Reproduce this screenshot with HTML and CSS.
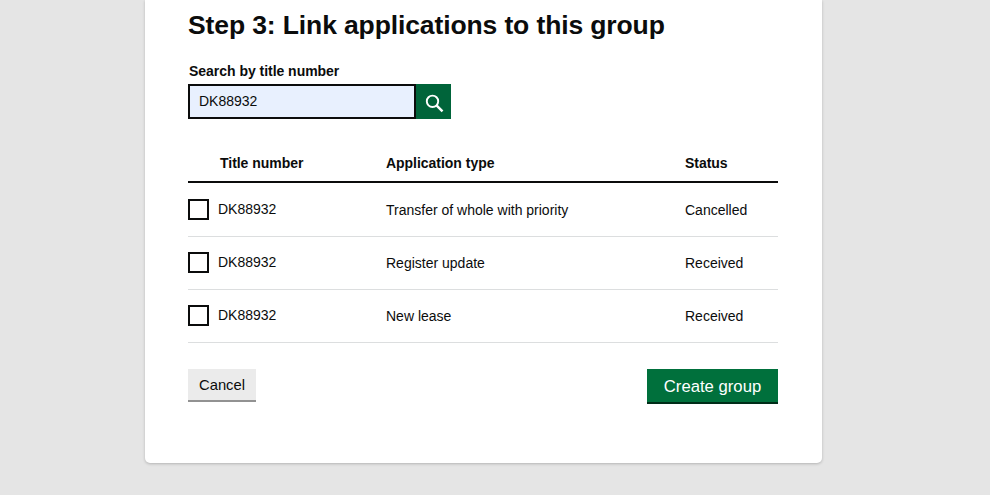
FILE: index.html
```html
<!DOCTYPE html>
<html lang="en">
<head>
<meta charset="utf-8">
<title>Link applications</title>
<link rel="stylesheet" href="styles.css">
</head>
<body>
<main class="card">
  <h1>Step 3: Link applications to this group</h1>
  <label class="label" for="search">Search by title number</label>
  <div class="search">
    <input id="search" class="search-input" type="text" value="DK88932">
    <button class="search-button" aria-label="Search"><svg width="19" height="19" viewBox="0 0 19 19" fill="none" stroke="#fff"><circle cx="7.5" cy="7.3" r="5.7" stroke-width="1.9"/><path d="M11.5 11.3L17.5 17.3" stroke-width="2.4"/></svg></button>
  </div>
  <div class="table">
    <div class="row head"><span class="title">Title number</span><span>Application type</span><span>Status</span></div>
    <div class="row"><label class="title"><input type="checkbox" class="check"><span class="number">DK88932</span></label><span>Transfer of whole with priority</span><span>Cancelled</span></div>
    <div class="row"><label class="title"><input type="checkbox" class="check"><span class="number">DK88932</span></label><span>Register update</span><span>Received</span></div>
    <div class="row"><label class="title"><input type="checkbox" class="check"><span class="number">DK88932</span></label><span>New lease</span><span>Received</span></div>
  </div>
  <div class="actions"><button class="cancel">Cancel</button><button class="create">Create group</button></div>
</main>
</body>
</html>
```
FILE: styles.css
```css
* { box-sizing: border-box; }
body { margin: 0; height: 495px; overflow: hidden; background: #e5e5e5; color: #0b0c0c; font-family: "Liberation Sans", Arial, sans-serif; font-size: 14px; }
button, input { font: inherit; color: inherit; margin: 0; border-radius: 0; }
.card { width: 677px; height: 463px; margin-left: 145px; padding: 9px 44px 0 43px; background: #fff; border-radius: 0 0 5px 5px; box-shadow: 0 1px 3px rgba(0,0,0,.22); }
h1 { margin: 0; font-size: 26.5px; letter-spacing: -.12px; line-height: 33px; height: 32px; white-space: nowrap; }
.label { display: block; margin: 21px 0 0 1px; height: 22px; line-height: 18px; font-weight: 700; letter-spacing: -.03px; }
.search { display: flex; height: 35px; }
.search-input { width: 228px; border: 2px solid #0b0c0c; background: #e8f0fe; padding: 0 9px 1px; }
.search-button { width: 35px; border: 0; padding: 3px 0 0 1px; background: #00643a; display: flex; align-items: center; justify-content: center; }
.table { margin-top: 25px; }
.row { display: grid; grid-template-columns: 198px 299px 1fr; align-items: center; height: 53px; line-height: 17px; border-bottom: 1px solid #dcdedf; }
.row:nth-child(2) { height: 54px; }
.row > span { padding-top: 1px; }
.row.head { height: 39px; border-bottom: 2px solid #0b0c0c; font-weight: 700; letter-spacing: -.03px; }
.head .title { padding-left: 32px; }
.title { display: flex; align-items: center; }
.check { appearance: none; width: 21px; height: 21px; border: 2px solid #0b0c0c; margin-right: 9px; }
.row:nth-child(n+3) .check { margin-bottom: 1px; }
.number { padding-bottom: 1px; }
.row:nth-child(n+3) .number { padding-bottom: 2px; }
.actions { display: flex; justify-content: space-between; align-items: flex-start; margin-top: 26px; }
.cancel { width: 68px; height: 33px; border: 0; border-bottom: 2px solid #929292; background: #ebebeb; padding: 1px 0 0; font-size: 14.8px; }
.create { width: 131px; height: 35px; border: 0; border-bottom: 2px solid #002d18; background: #00703c; color: #fff; font-size: 16.7px; padding: 2px 0 0; }
```
